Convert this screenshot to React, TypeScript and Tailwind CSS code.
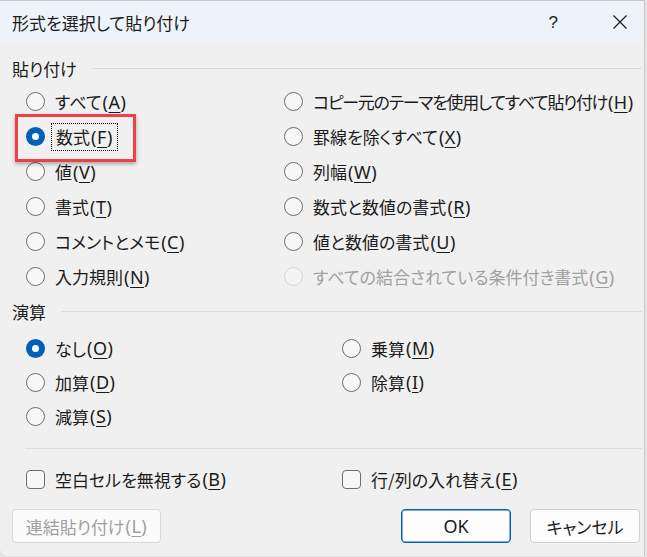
import * as React from 'react';

const FONT = "font-['Noto_Sans_CJK_JP','Noto_Sans',sans-serif] [font-feature-settings:'palt']";

const Key: React.FC<{ k: string }> = ({ k }) => (
  <span className="ml-[1px] text-[18px] tracking-[0.5px] font-['Noto_Sans','Noto_Sans_CJK_JP',sans-serif]">
    (<span className="underline underline-offset-[3px] decoration-1">{k}</span>)
  </span>
);

const Radio: React.FC<{ checked?: boolean; disabled?: boolean }> = ({ checked, disabled }) => {
  if (checked) {
    return (
      <span className="flex h-[19px] w-[19px] shrink-0 items-center justify-center rounded-full bg-[#005fb8]">
        <span className="h-[7px] w-[7px] rounded-full bg-white" />
      </span>
    );
  }
  return (
    <span
      className={`h-[19px] w-[19px] shrink-0 rounded-full border ${
        disabled ? 'border-[#d4d4d4] bg-[#f4f4f4]' : 'border-[#6e6e6e] bg-[#f7f7f7]'
      }`}
    />
  );
};

type Opt = { label: string; k: string; checked?: boolean; disabled?: boolean; focus?: boolean; tight?: boolean };

const Option: React.FC<{ o: Opt }> = ({ o }) => (
  <div className="flex h-[35px] items-center">
    <Radio checked={o.checked} disabled={o.disabled} />
    <span
      className={`flex items-center leading-none whitespace-nowrap ${o.disabled ? 'text-[#a0a0a0]' : 'text-[#1b1b1b]'} ${
        o.focus ? 'ml-[11px] outline-1 outline-dotted outline-black outline-offset-[4px]' : 'ml-[10px]'
      }`}
    >
      <span className={o.tight ? 'tracking-[-1.3px]' : ''}>{o.label}</span>
      <Key k={o.k} />
    </span>
  </div>
);

const GroupHeader: React.FC<{ title: string }> = ({ title }) => (
  <div className="flex h-[24px] items-center pl-[12px] pr-[2px]">
    <span className="leading-none text-[#1b1b1b]">{title}</span>
    <div className="ml-[15px] h-px flex-1 bg-[#dadada]" />
  </div>
);

const pasteLeft: Opt[] = [
  { label: 'すべて', k: 'A' },
  { label: '数式', k: 'F', checked: true, focus: true },
  { label: '値', k: 'V' },
  { label: '書式', k: 'T' },
  { label: 'コメントとメモ', k: 'C' },
  { label: '入力規則', k: 'N' },
];

const pasteRight: Opt[] = [
  { label: 'コピー元のテーマを使用してすべて貼り付け', k: 'H', tight: true },
  { label: '罫線を除くすべて', k: 'X' },
  { label: '列幅', k: 'W' },
  { label: '数式と数値の書式', k: 'R' },
  { label: '値と数値の書式', k: 'U' },
  { label: 'すべての結合されている条件付き書式', k: 'G', disabled: true },
];

export default function App() {
  return (
    <div className={`h-[557px] w-[647px] overflow-hidden bg-[#e4e4e4] text-[17px] ${FONT}`}>
      <div className="h-[556px] w-[645px] overflow-hidden rounded-bl-[8px] border-r border-t border-[#c9c9c9] bg-[#f0f0f0]">
        {/* Title bar */}
        <div className="flex h-[42px] items-center bg-[#eef3f9] pl-[12px]">
          <span className="flex-1 leading-none text-[#1b1b1b]">形式を選択して貼り付け</span>
          <span className="mr-[54px] text-[17px] leading-none text-[#1b1b1b] font-['Liberation_Sans',sans-serif]">?</span>
          <svg width="16" height="16" viewBox="0 0 16 16" className="mr-[16px]">
            <path d="M1.5 1.5 L14.5 14.5 M14.5 1.5 L1.5 14.5" stroke="#1b1b1b" strokeWidth="1.2" />
          </svg>
        </div>

        <div className="mt-[13px]">
          <GroupHeader title="貼り付け" />
        </div>

        {/* paste options */}
        <div className="relative mt-[4px] grid grid-cols-[258px_1fr] pl-[26px]">
          <div className="flex flex-col">
            {pasteLeft.map((o) => (
              <Option key={o.k} o={o} />
            ))}
          </div>
          <div className="flex flex-col">
            {pasteRight.map((o) => (
              <Option key={o.k} o={o} />
            ))}
          </div>
          <div className="pointer-events-none absolute left-[15px] top-[30px] h-[48px] w-[121px] border-[3px] border-[#ec4147] shadow-[0_2px_4px_rgba(0,0,0,0.3)]" />
        </div>

        <div className="mt-[5px]">
          <GroupHeader title="演算" />
        </div>

        {/* operations */}
        <div className="mt-[8px] grid grid-cols-[316px_1fr] pl-[26px]">
          <div className="flex flex-col [&>div]:h-[34px]">
            <Option o={{ label: 'なし', k: 'O', checked: true }} />
            <Option o={{ label: '加算', k: 'D' }} />
            <Option o={{ label: '減算', k: 'S' }} />
          </div>
          <div className="flex flex-col [&>div]:h-[34px]">
            <Option o={{ label: '乗算', k: 'M' }} />
            <Option o={{ label: '除算', k: 'I' }} />
          </div>
        </div>

        <div className="ml-[25px] mr-[2px] mt-[15px] h-px bg-[#dadada]" />

        {/* checkboxes */}
        <div className="mt-[15px] grid h-[30px] grid-cols-[316px_1fr] items-center pl-[26px]">
          <div className="flex items-center">
            <span className="h-[19px] w-[19px] rounded-[4px] border border-[#6e6e6e] bg-[#f7f7f7]" />
            <span className="ml-[10px] flex items-center leading-none text-[#1b1b1b]">
              空白セルを無視する<Key k="B" />
            </span>
          </div>
          <div className="flex items-center">
            <span className="h-[19px] w-[19px] rounded-[4px] border border-[#6e6e6e] bg-[#f7f7f7]" />
            <span className="ml-[10px] flex items-center leading-none text-[#1b1b1b]">
              行/列の入れ替え<Key k="E" />
            </span>
          </div>
        </div>

        {/* buttons */}
        <div className="mt-[15px] flex h-[34px] pl-[12px] pr-[4px]">
          <button className="flex h-[34px] w-[149px] items-center justify-center rounded-[4px] border border-[#d9d9d9] bg-[#fbfbfb] leading-none text-[#a0a0a0]">
            連結貼り付け<Key k="L" />
          </button>
          <div className="flex-1" />
          <button className="h-[34px] w-[110px] rounded-[4px] border border-[#005fb8] bg-[#fdfdfd] text-[18px] leading-none text-[#1b1b1b] shadow-[inset_0_0_0_0.5px_#005fb8] font-['Noto_Sans',sans-serif]">
            OK
          </button>
          <button className="ml-[19px] h-[34px] w-[110px] rounded-[4px] border border-[#d0d0d0] bg-[#fdfdfd] leading-none text-[#1b1b1b]">
            キャンセル
          </button>
        </div>
      </div>
    </div>
  );
}
